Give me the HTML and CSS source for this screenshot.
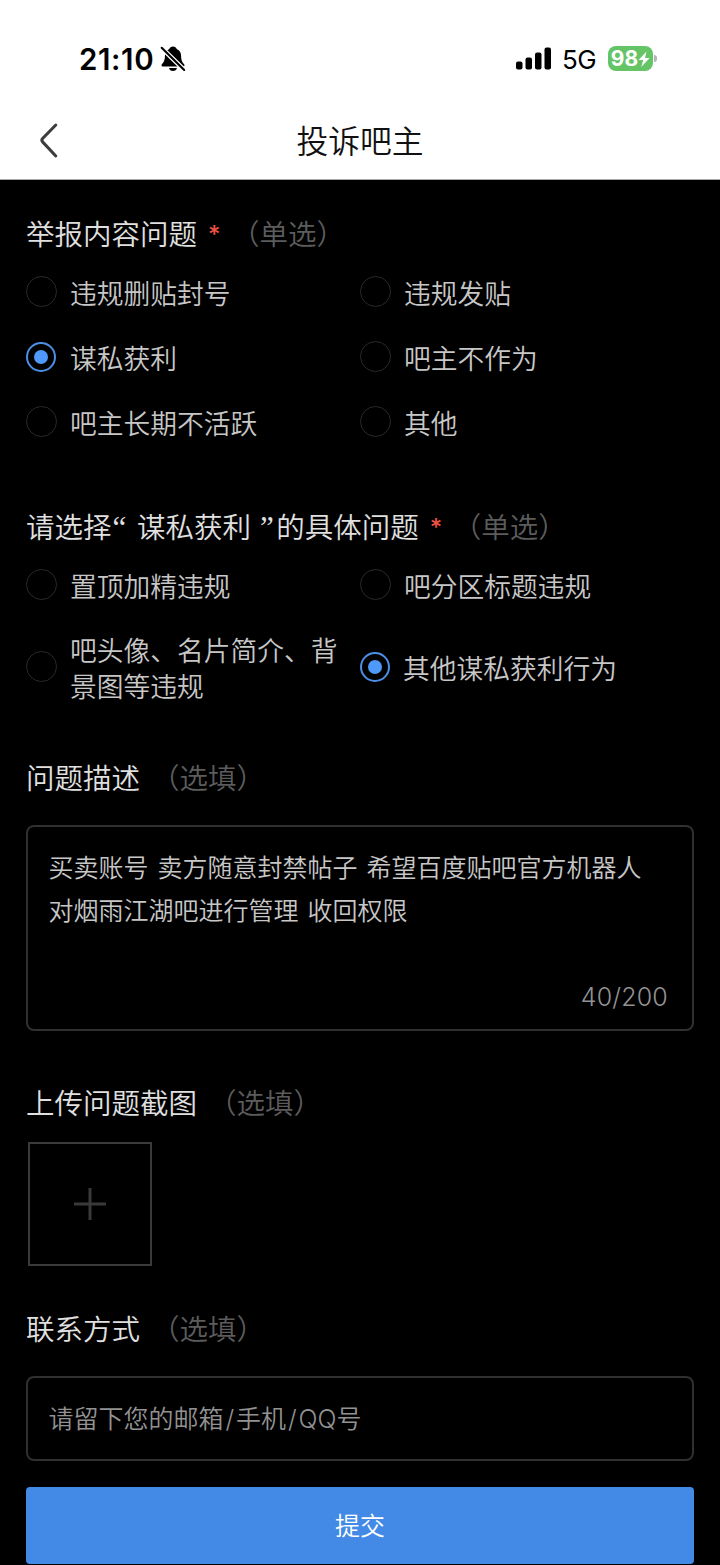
FILE: index.html
```html
<!DOCTYPE html>
<html lang="zh-CN">
<head>
<meta charset="utf-8">
<title>投诉吧主</title>
<link rel="stylesheet" href="styles.css">
</head>
<body>
<header class="top">
  <div class="status">
    <span class="time">21:10</span>
    <svg class="bell" width="26" height="28" viewBox="0 0 26 28">
      <path d="M13 1.600c-1.900 0-3.300 1.100-3.700 2.500C6.200 5.500 4.900 8 4.900 11c0 4.400-1.300 6.300-3 8.200-.8 1-.4 2.300.9 2.300h20.400c1.300 0 1.700-1.300.9-2.300-1.700-1.900-3-3.800-3-8.200 0-3-1.300-5.500-4.400-6.900-.4-1.400-1.800-2.500-3.700-2.500zM9 23h8c-.4 1.900-2 3-4 3s-3.600-1.100-4-3z" fill="#000"/>
      <path d="M0 1.200L26 26.700" stroke="#fff" stroke-width="4.600"/>
      <path d="M1.700 2.800L24.200 25" stroke="#000" stroke-width="2.100" stroke-linecap="round"/>
    </svg>
    <svg class="signal" width="36" height="24" viewBox="0 0 36 24">
      <rect x="0" y="14.500" width="6.500" height="8" rx="2"/>
      <rect x="9.500" y="10.500" width="6.500" height="12" rx="2"/>
      <rect x="19" y="5.500" width="6.500" height="17" rx="2"/>
      <rect x="28.500" y="0.500" width="6.500" height="22" rx="2"/>
    </svg>
    <span class="net">5G</span>
    <span class="battery"><span>98</span><svg width="12" height="18" viewBox="0 0 12 18"><path d="M8.500 1.500L.6 10h4.600L3.300 17 11.600 8H7z" fill="#fff"/></svg></span>
    <span class="cap"></span>
  </div>
  <nav class="nav">
    <svg class="back" width="20" height="38" viewBox="0 0 20 38"><path d="M16.800 4L3.600 17.500q-1.500 1.700 0 3.400L16.800 35" fill="none" stroke="#3c3c3c" stroke-width="3" stroke-linecap="round"/></svg>
    <h1 class="title">投诉吧主</h1>
  </nav>
</header>
<main class="form">
  <h2 class="heading">举报内容问题<span class="star">*</span><span class="hint">（单选）</span></h2>
  <div class="options">
    <label class="option"><i class="radio"></i><span>违规删贴封号</span></label>
    <label class="option"><i class="radio"></i><span>违规发贴</span></label>
    <label class="option"><i class="radio on"></i><span>谋私获利</span></label>
    <label class="option"><i class="radio"></i><span>吧主不作为</span></label>
    <label class="option"><i class="radio"></i><span>吧主长期不活跃</span></label>
    <label class="option"><i class="radio"></i><span>其他</span></label>
  </div>
  <h2 class="heading second">请选择<span class="quote">“</span>谋私获利<span class="quote close">”</span>的具体问题<span class="star">*</span><span class="hint">（单选）</span></h2>
  <div class="options detail">
    <label class="option"><i class="radio"></i><span>置顶加精违规</span></label>
    <label class="option"><i class="radio"></i><span>吧分区标题违规</span></label>
    <label class="option"><i class="radio"></i><span>吧头像、名片简介、背<br>景图等违规</span></label>
    <label class="option picked"><i class="radio on"></i><span>其他谋私获利行为</span></label>
  </div>
  <h2 class="heading third">问题描述<span class="hint optional">（选填）</span></h2>
  <div class="textarea">
    <p>买卖账号 卖方随意封禁帖子 希望百度贴吧官方机器人<br>对烟雨江湖吧进行管理 收回权限</p>
    <span class="count">40/200</span>
  </div>
  <h2 class="heading fourth">上传问题截图<span class="hint optional">（选填）</span></h2>
  <div class="upload"><svg width="34" height="34" viewBox="0 0 34 34"><path d="M17 1v32M1 17h32" stroke="#393939" stroke-width="3"/></svg></div>
  <h2 class="heading fifth">联系方式<span class="hint optional">（选填）</span></h2>
  <div class="input">请留下您的邮箱<span class="slash">/</span>手机<span class="slash">/</span>QQ号</div>
  <button class="submit">提交</button>
</main>
</body>
</html>
```

FILE: styles.css
```css
* { box-sizing: border-box; }
body {
  margin: 0;
  height: 1565px;
  overflow: hidden;
  background: #000;
  font-family: Inter, "Noto Sans CJK SC", sans-serif;
  font-weight: 350;
}
h1, h2, p { margin: 0; font-weight: 350; }
svg { display: block; flex: none; }
.top { height: 180px; background: #fff; border-bottom: 1px solid #aaa; color: #000; }
.status { display: flex; align-items: center; height: 101px; padding: 16px 0 0 79px; }
.time { width: 81px; font-size: 29.500px; line-height: 34px; font-weight: 600; letter-spacing: 0.600px; white-space: nowrap; }
.signal { margin-left: 330px; }
.net { margin-left: 10px; width: 45px; font-size: 26px; font-weight: 400; letter-spacing: -0.500px; padding-top: 1px; }
.battery {
  display: flex;
  align-items: center;
  justify-content: center;
  width: 45px;
  height: 25px;
  margin-left: 1px;
  border-radius: 8px;
  background: #65c466;
  color: #fff;
  font-size: 21px;
  font-weight: 700;
}
.cap { width: 3px; height: 7px; margin-left: 1px; border-radius: 0 3px 3px 0; background: #b5b5b5; }
.nav { display: grid; grid-template-columns: 39px 1fr 39px; align-items: center; height: 78px; }
.back { grid-column: 1; margin-left: 39px; }
.title { grid-column: 2; padding-top: 3px; text-align: center; font-size: 31.800px; line-height: 40px; color: #111; }
.form { padding: 35px 26px 0; }
.heading { display: flex; height: 40px; line-height: 40px; font-size: 28.500px; color: #e0e0e0; white-space: nowrap; }
.star { width: 34px; padding-left: 11px; color: #ee5144; font-size: 24px; line-height: 40px; font-weight: 500; }
.hint { color: #5c5c5c; }
.optional { margin-left: 11px; }
.quote { width: 25.400px; padding-left: 1px; font-family: "Liberation Serif", serif; font-size: 31px; }
.close { padding-left: 9px; }
.options { display: grid; grid-template-columns: 334px 334px; grid-auto-rows: 65.300px; margin-top: 3.600px; }
.detail { grid-template-rows: 65.300px 100px; }
.option { display: flex; align-items: center; gap: 14px; font-size: 26.750px; line-height: 36px; color: #c7c7c7; white-space: nowrap; }
.option span { padding-top: 5px; }
.picked span { margin-left: -1px; }
.radio { display: flex; flex: none; width: 31px; height: 31px; border: 1.500px solid #292929; border-radius: 50%; }
.option .radio { margin-right: -1px; }
.option .radio.on { width: 30px; height: 30px; margin-right: 0; border: 2px solid #4d8fe6; align-items: center; justify-content: center; }
.radio.on::after { content: ""; width: 14px; height: 14px; border-radius: 50%; background: #4e99fa; }
.second { margin-top: 53.500px; }
.third { margin-top: 42.400px; }
.textarea {
  display: flex;
  flex-direction: column;
  justify-content: space-between;
  height: 206px;
  margin-top: 26px;
  padding: 20px 24px 14px 20.500px;
  border: 2px solid #303030;
  border-radius: 8px;
  color: #c7c7c7;
  font-size: 25px;
  line-height: 43px;
  word-spacing: 2px;
  white-space: nowrap;
}
.count { align-self: flex-end; color: #929292; line-height: 36px; letter-spacing: 0.200px; }
.fourth { margin-top: 53px; }
.upload { display: flex; align-items: center; justify-content: center; width: 124px; height: 124px; margin: 18px 0 0 2px; padding: 0 1px 1px 0; border: 2px solid #3a3a3a; }
.fifth { margin-top: 44px; }
.input { height: 85px; margin-top: 26px; padding: 0 20.500px; border: 2px solid #303030; border-radius: 8px; color: #929292; font-size: 25px; line-height: 82px; }
.slash { padding: 0 1.900px; }
.submit { display: block; width: 668px; height: 77px; margin-top: 26px; padding: 2px 0 0; border: 0; border-radius: 4px; background: #428ae6; color: #fff; font: 350 25px/75px Inter, "Noto Sans CJK SC", sans-serif; }
```
